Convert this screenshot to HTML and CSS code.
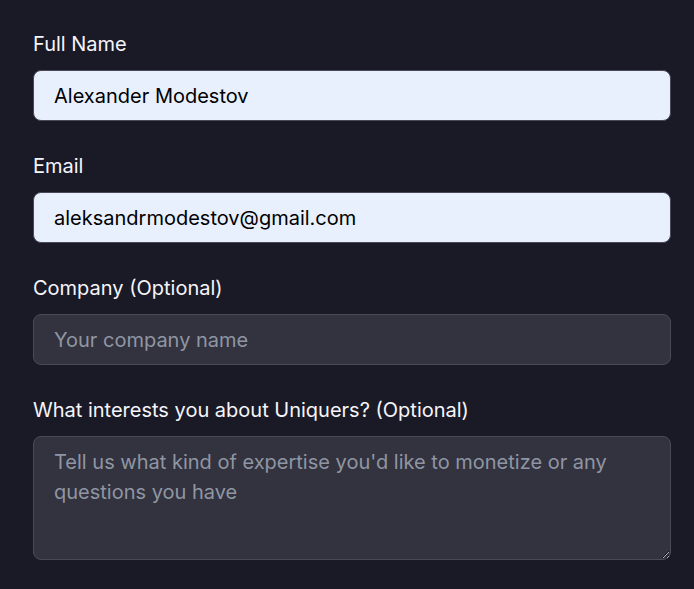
FILE: index.html
```html
<!DOCTYPE html>
<html lang="en">
<head>
<meta charset="utf-8">
<link rel="stylesheet" href="styles.css">
</head>
<body>
<form class="form">
  <div class="field">
    <label class="label" for="name">Full Name</label>
    <input class="input input-filled" id="name" type="text" value="Alexander Modestov">
  </div>
  <div class="field">
    <label class="label" for="email">Email</label>
    <input class="input input-filled" id="email" type="email" value="aleksandrmodestov@gmail.com">
  </div>
  <div class="field">
    <label class="label" for="company">Company (Optional)</label>
    <input class="input" id="company" type="text" placeholder="Your company name">
  </div>
  <div class="field">
    <label class="label" for="interest">What interests you about Uniquers? (Optional)</label>
    <textarea class="input textarea" id="interest" placeholder="Tell us what kind of expertise you'd like to monetize or any questions you have"></textarea>
  </div>
</form>
</body>
</html>
```
FILE: styles.css
```css
html, body {
  margin: 0;
  padding: 0;
  background: #1a1a27;
}
body {
  font-family: Inter, "Noto Sans", sans-serif;
  overflow: hidden;
}
.form {
  display: flex;
  flex-direction: column;
  gap: 31px;
  padding: 30px 0 0 33px;
  width: 638px;
}
.field {
  display: flex;
  flex-direction: column;
  gap: 12px;
}
.label {
  color: #f5f5fa;
  font-size: 20px;
  line-height: 28px;
}
.input {
  box-sizing: border-box;
  width: 100%;
  height: 51px;
  margin: 0;
  padding: 10px 20px;
  font-family: inherit;
  font-size: 20px;
  line-height: 29px;
  color: #f0f0f5;
  background: #33323f;
  border: 1px solid #4a4959;
  border-radius: 8px;
  outline: none;
}
.input::placeholder {
  color: #8f96a3;
  opacity: 1;
}
.input-filled {
  background: #e8f0fe;
  color: #000;
}
.textarea {
  height: 124px;
  line-height: 30px;
  padding-top: 10px;
  resize: vertical;
  display: block;
}
```
